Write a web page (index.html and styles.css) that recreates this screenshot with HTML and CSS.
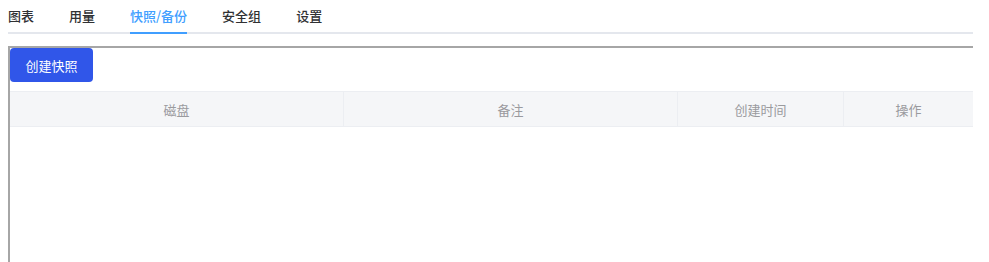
FILE: index.html
```html
<!DOCTYPE html>
<html lang="zh-CN">
<head>
    <meta charset="UTF-8">
    <meta name="viewport" content="width=device-width, initial-scale=1.0">
    <title>快照/备份</title>
    <link rel="stylesheet" href="styles.css">
</head>
<body>
    <div class="page">
        <div class="tabs">
            <span class="tab">图表</span>
            <span class="tab">用量</span>
            <span class="tab active">快照/备份</span>
            <span class="tab">安全组</span>
            <span class="tab">设置</span>
        </div>
        <div class="frame">
            <button class="create">创建快照</button>
            <div class="snapshots">
                <div class="head">
                    <div class="th">磁盘</div>
                    <div class="th">备注</div>
                    <div class="th">创建时间</div>
                    <div class="th">操作</div>
                </div>
                <div class="rows"></div>
            </div>
        </div>
    </div>
</body>
</html>
```

FILE: styles.css
```css
body {
    margin: 0;
    padding: 0 8px;
    font-family: "Noto Sans CJK SC", "Noto Sans", sans-serif;
    font-size: 13px;
    color: #303133;
    background: #fff;
    overflow: hidden;
}
.page {
    width: 965px;
}
.tabs {
    display: flex;
    gap: 35px;
    height: 32px;
    border-bottom: 2px solid #e4e7ed;
}
.tab {
    line-height: 32px;
    font-weight: 500;
    color: #303133;
    border-bottom: 2px solid transparent;
    margin-bottom: -2px;
}
.tab.active {
    color: #409eff;
    border-bottom-color: #409eff;
}
.frame {
    margin-top: 12px;
    height: 216px;
    border-top: 2px solid #a6a6a6;
    border-left: 2px solid #a6a6a6;
    box-sizing: border-box;
}
.create {
    display: block;
    width: 83px;
    height: 34px;
    margin: 0 0 9px 0;
    border: none;
    border-radius: 4px;
    background: #3056e9;
    color: #fff;
    font-family: inherit;
    font-size: 13px;
    cursor: pointer;
}
.snapshots {
    width: 963px;
}
.head {
    display: grid;
    grid-template-columns: 334px 334px 166px 129px;
    height: 36px;
    box-sizing: border-box;
    background: #f5f6f8;
    border-top: 1px solid #eceef2;
    border-bottom: 1px solid #eceef2;
}
.th {
    display: flex;
    align-items: center;
    justify-content: center;
    color: #9a9a9e;
    border-right: 1px solid #eceef2;
}
.th:last-child {
    border-right: none;
}
```
